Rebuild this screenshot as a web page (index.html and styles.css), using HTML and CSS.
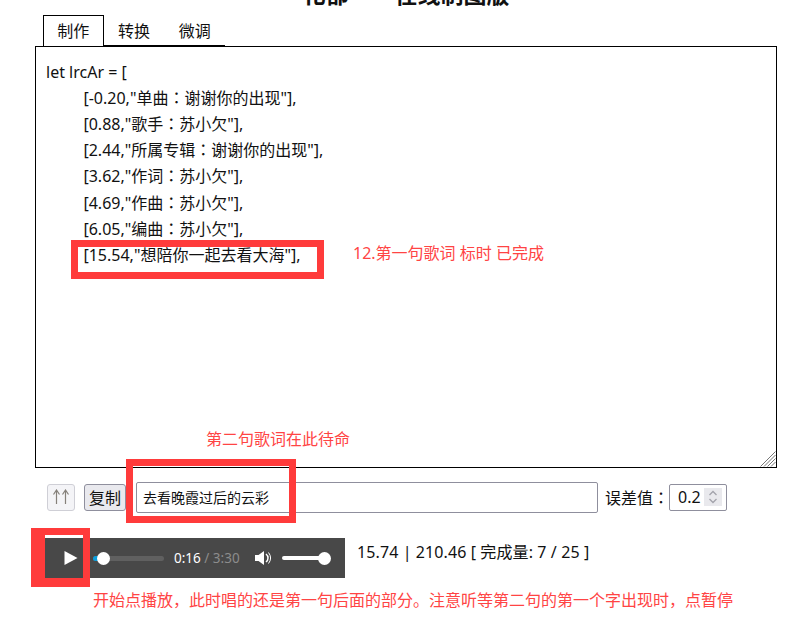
FILE: index.html
```html
<!DOCTYPE html>
<html lang="zh">
<head>
<meta charset="utf-8">
<title>歌词制作</title>
<link rel="stylesheet" href="styles.css">
</head>
<body>
<main class="page">
  <h1 class="title">花都——在线制图版</h1>
  <nav class="tabs">
    <span class="tab active">制作</span>
    <span class="tab">转换</span>
    <span class="tab">微调</span>
  </nav>
  <div class="editor-wrap">
  <textarea class="editor" lang="zh-TW" spellcheck="false">let lrcAr = [
	[-0.20,"单曲：谢谢你的出现"],
	[0.88,"歌手：苏小欠"],
	[2.44,"所属专辑：谢谢你的出现"],
	[3.62,"作词：苏小欠"],
	[4.69,"作曲：苏小欠"],
	[6.05,"编曲：苏小欠"],
	[15.54,"想陪你一起去看大海"],</textarea>
  <svg class="grip" width="16" height="16" viewBox="0 0 16 16"><path d="M15.500 .5 .5 15.500M15.500 4 4 15.500M15.500 7.500 7.500 15.500M15.500 11 11 15.500" stroke="#777" stroke-width="1" fill="none"/></svg>
  </div>
  <div class="tools">
    <button class="btn up"><svg width="18" height="16" viewBox="0 0 18 16"><path d="M4.500 15V1.500M1.500 5.500 4.500 1 7.500 5.500M13.500 15V1.500M10.500 5.500 13.500 1 16.500 5.500" fill="none" stroke="#85807a" stroke-width="1.200"/></svg></button>
    <button class="btn copy">复制</button>
    <input class="line" type="text" value="去看晚霞过后的云彩">
    <label class="err" lang="zh-TW">误差值：</label>
    <div class="num"><span>0.2</span><span class="spin"><svg width="12" height="16" viewBox="0 0 12 16"><path d="M2.500 6 6 2.500 9.500 6M2.500 10 6 13.500 9.500 10" fill="none" stroke="#a3a3ab" stroke-width="1.300"/></svg></span></div>
  </div>
  <div class="playrow">
    <div class="player">
      <svg class="play" width="14" height="16" viewBox="0 0 14 16"><path d="M.5 1 13.500 8 .5 15Z" fill="#fff"/></svg>
      <div class="seek"><i class="seek-done"></i><i class="knob seek-knob"></i></div>
      <span class="time">0:16<em> / 3:30</em></span>
      <svg class="vol" width="16" height="14" viewBox="0 0 16 14"><path d="M0 4h3.500L9 0v14L3.500 10H0Z" fill="#fff"/><path d="M11 3a5 5 0 0 1 0 8" fill="none" stroke="#fff" stroke-width="1.500"/><path d="M13.500 1.500a9 9 0 0 1 0 11" fill="none" stroke="#fff" stroke-width="1"/></svg>
      <div class="volbar"><i class="knob vol-knob"></i></div>
    </div>
    <p class="stat">15.74 | 210.46 [ 完成量: 7 / 25 ]</p>
  </div>
</main>
<div class="mark m1"></div>
<div class="mark m2"></div>
<div class="mark m3"></div>
<span class="note n1">12.第一句歌词 标时 已完成</span>
<span class="note n2">第二句歌词在此待命</span>
<span class="note n3">开始点播放，此时唱的还是第一句后面的部分。注意听等第二句的第一个字出现时，点暂停</span>
</body>
</html>
```
FILE: styles.css
```css
* { box-sizing: border-box; }
html, body { margin: 0; height: 620px; overflow: hidden; background: #fff; }
body { position: relative; font-family: "Noto Sans", "Noto Sans CJK SC", sans-serif; color: #111; }
.page { padding: 0 21px 0 35px; display: flex; flex-direction: column; }
.title { margin: -19px 0 0; height: 34px; font-size: 23px; line-height: 26px; font-weight: 700; text-align: center; white-space: nowrap; }
.tabs { display: flex; margin-left: 8px; height: 32px; border-bottom: 2px solid #000; width: 182px; }
.tab { width: 61px; height: 30px; font-size: 16px; line-height: 32px; text-align: center; }
.tab.active { border: 1px solid #000; border-bottom: 0; background: #fff; height: 32px; line-height: 30px; position: relative; }
.editor-wrap { position: relative; width: 742px; height: 422px; margin-top: -1px; }
.editor { display: block; width: 100%; height: 100%; margin: 0; padding: 11.500px 10px; border: 1px solid #000; border-radius: 0; outline: 0; font: 16px/26.200px "Noto Sans", "Noto Sans CJK TC", sans-serif; color: #111; tab-size: 9; background: #fff; resize: none; }
.grip { position: absolute; right: 1px; bottom: 1px; }
.tools { display: flex; align-items: center; margin: 14px 0 0 12px; height: 30px; }
.btn { display: flex; align-items: center; justify-content: center; height: 27px; padding: 0; border-radius: 3px; font: 16px "Noto Sans", "Noto Sans CJK SC", sans-serif; color: #111; }
.up { width: 28px; background: #f4f4f7; border: 1px solid #cfcfd6; }
.copy { width: 42px; margin-left: 9px; background: #e9e9ee; border: 1px solid #8f8f9d; }
.line { width: 462px; height: 31px; margin-left: 10px; padding: 0 6px; border: 1px solid #8f8f9d; border-radius: 2px; font: 14px "Noto Sans", "Noto Sans CJK SC", sans-serif; color: #111; outline: 0; }
.err { margin-left: 7px; font-family: "Noto Sans", "Noto Sans CJK TC", sans-serif; font-size: 16px; white-space: nowrap; }
.num { display: flex; align-items: center; justify-content: space-between; width: 58px; height: 27px; padding: 0 4px 0 8px; border: 1px solid #8f8f9d; border-radius: 2px; font-size: 16px; }
.spin { display: flex; align-items: center; justify-content: center; width: 18px; height: 18px; background: #e9e9ed; }
.playrow { display: flex; align-items: flex-start; margin: 26px 0 0 10px; }
.player { display: flex; align-items: center; width: 300px; height: 40px; background: #484848; padding-left: 19px; color: #fff; }
.play { flex: none; }
.seek { position: relative; width: 71px; height: 5px; margin-left: 15px; background: #606060; border-radius: 3px; }
.seek-done { position: absolute; left: 0; top: 0; width: 8px; height: 5px; background: #0b9ddb; border-radius: 3px; }
.knob { position: absolute; top: 50%; width: 13px; height: 13px; margin-top: -6.500px; background: #fff; border-radius: 50%; }
.seek-knob { left: 4px; }
.time { margin-left: 10px; width: 81px; font-size: 13.500px; white-space: nowrap; }
.time em { font-style: normal; color: #8c8c8c; }
.vol { flex: none; }
.volbar { position: relative; width: 48px; height: 4px; margin-left: 11px; background: #fff; border-radius: 2px; }
.vol-knob { right: -1px; }
.stat { margin: 3px 0 0 12px; font-size: 16px; line-height: 22px; letter-spacing: .1px; white-space: nowrap; }
.mark { position: absolute; border-style: solid; border-color: #ff3b3b; pointer-events: none; }
.m1 { left: 71px; top: 240px; width: 253px; height: 39px; border-width: 7px; }
.m2 { left: 126px; top: 459px; width: 170px; height: 64px; border-width: 7px; }
.m3 { left: 31px; top: 528px; width: 59px; height: 59px; border-width: 7px 7px 9px 14px; }
.note { position: absolute; font-size: 16px; line-height: 20px; color: #ff4444; white-space: nowrap; }
.n1 { left: 353px; top: 243px; }
.n2 { left: 206px; top: 429px; }
.n3 { left: 93px; top: 590px; }
```
